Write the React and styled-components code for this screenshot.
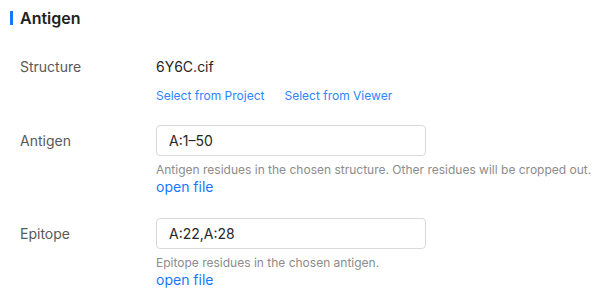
import React from "react";
import styled, { createGlobalStyle } from "styled-components";

const Global = createGlobalStyle`
  html, body { margin: 0; padding: 0; background: #fff; }
  body { font-family: Inter, "Noto Sans", sans-serif; -webkit-font-smoothing: antialiased; }
`;

const Page = styled.div`
  width: 602px;
  height: 306px;
  box-sizing: border-box;
  padding: 6px 0 0 10px;
  overflow: hidden;
`;

const Title = styled.h2`
  margin: 0;
  display: flex;
  align-items: center;
  gap: 7px;
  font-size: 16px;
  line-height: 24px;
  font-weight: 600;
  color: #1f1f1f;
  &::before {
    content: "";
    width: 3px;
    height: 14px;
    background: #1677ff;
  }
`;

const Form = styled.div`
  display: flex;
  flex-direction: column;
  padding: 26px 0 0 10px;
`;

const Row = styled.div`
  display: grid;
  grid-template-columns: 136px 1fr;
  align-items: start;
  margin-top: ${(p) => p.$gap || 0}px;
`;

const Label = styled.div`
  font-size: 14px;
  line-height: ${(p) => (p.$tall ? "31px" : "22px")};
  color: #595959;
`;

const Field = styled.div`
  display: flex;
  flex-direction: column;
`;

const Value = styled.div`
  font-size: 14px;
  line-height: 22px;
  color: #262626;
`;

const Links = styled.div`
  display: flex;
  gap: 20px;
  margin-top: 8px;
`;

const Link = styled.a`
  font-size: 12px;
  line-height: 20px;
  color: #2d86ff;
  text-decoration: none;
  cursor: pointer;
`;

const FileLink = styled.a`
  font-size: 14px;
  line-height: 18px;
  color: #1677ff;
  text-decoration: none;
  cursor: pointer;
`;

const Input = styled.input`
  box-sizing: border-box;
  width: 270px;
  height: 31px;
  padding: 0 12px;
  border: 1px solid #d9d9d9;
  border-radius: 4px;
  font-family: inherit;
  font-size: 14px;
  color: #262626;
  outline: none;
`;

const Help = styled.div`
  margin-top: 6px;
  font-size: 12px;
  line-height: 16px;
  color: #8c8c8c;
  white-space: nowrap;
`;

export default function App() {
  return (
    <Page>
      <Global />
      <Title>Antigen</Title>
      <Form>
        <Row>
          <Label>Structure</Label>
          <Field>
            <Value>6Y6C.cif</Value>
            <Links>
              <Link>Select from Project</Link>
              <Link>Select from Viewer</Link>
            </Links>
          </Field>
        </Row>
        <Row $gap={19}>
          <Label $tall>Antigen</Label>
          <Field>
            <Input defaultValue="A:1–50" />
            <Help>Antigen residues in the chosen structure. Other residues will be cropped out.</Help>
            <FileLink>open file</FileLink>
          </Field>
        </Row>
        <Row $gap={22}>
          <Label $tall>Epitope</Label>
          <Field>
            <Input defaultValue="A:22,A:28" />
            <Help>Epitope residues in the chosen antigen.</Help>
            <FileLink>open file</FileLink>
          </Field>
        </Row>
      </Form>
    </Page>
  );
}
